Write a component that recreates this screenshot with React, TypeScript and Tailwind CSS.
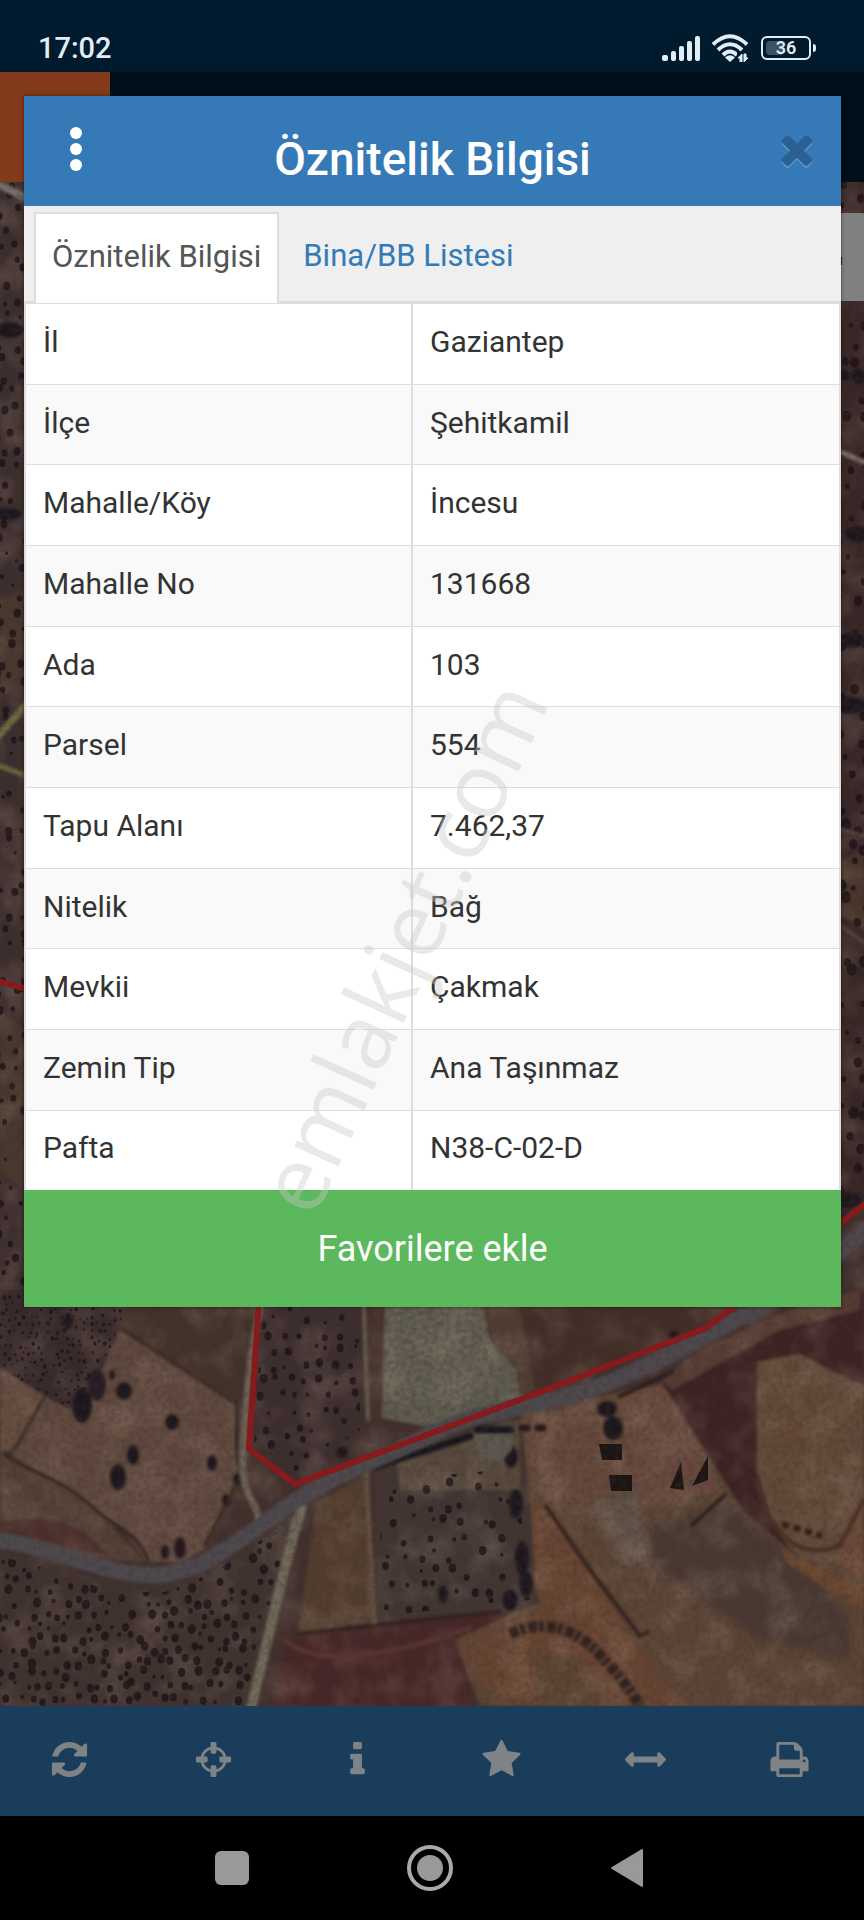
import type { ReactNode } from 'react';

const ROWS = [
  ['İl', 'Gaziantep'],
  ['İlçe', 'Şehitkamil'],
  ['Mahalle/Köy', 'İncesu'],
  ['Mahalle No', '131668'],
  ['Ada', '103'],
  ['Parsel', '554'],
  ['Tapu Alanı', '7.462,37'],
  ['Nitelik', 'Bağ'],
  ['Mevkii', 'Çakmak'],
  ['Zemin Tip', 'Ana Taşınmaz'],
  ['Pafta', 'N38-C-02-D'],
];

const TOOLS = [
  {
    name: 'Yenile',
    d: 'M1639 1056q0 5-1 7-64 268-268 434.5t-478 166.5q-146 0-282.5-55t-243.5-157l-129 129q-19 19-45 19t-45-19-19-45v-448q0-26 19-45t45-19h448q26 0 45 19t19 45-19 45l-137 137q71 66 161 102t187 36q134 0 250-65t186-179q11-17 53-117 8-23 30-23h192q13 0 22.5 9.5t9.5 22.5zm25-800v448q0 26-19 45t-45 19h-448q-26 0-45-19t-19-45 19-45l138-138q-148-137-349-137-134 0-250 65t-186 179q-11 17-53 117-8 23-30 23h-199q-13 0-22.5-9.5t-9.5-22.5v-7q65-268 270-434.5t480-166.5q146 0 284 55.5t245 156.5l130-129q19-19 45-19t45 19 19 45z',
  },
  {
    name: 'Konum',
    d: 'M1325 1024h-109q-26 0-45-19t-19-45v-128q0-26 19-45t45-19h109q-32-108-112.5-188.5t-188.5-112.5v109q0 26-19 45t-45 19h-128q-26 0-45-19t-19-45v-109q-108 32-188.5 112.5t-112.5 188.5h109q26 0 45 19t19 45v128q0 26-19 45t-45 19h-109q32 108 112.5 188.5t188.5 112.5v-109q0-26 19-45t45-19h128q26 0 45 19t19 45v109q108-32 188.5-112.5t112.5-188.5zm339-192v128q0 26-19 45t-45 19h-143q-37 161-154.5 278.5t-278.5 154.5v143q0 26-19 45t-45 19h-128q-26 0-45-19t-19-45v-143q-161-37-278.5-154.5t-154.5-278.5h-143q-26 0-45-19t-19-45v-128q0-26 19-45t45-19h143q37-161 154.5-278.5t278.5-154.5v-143q0-26 19-45t45-19h128q26 0 45 19t19 45v143q161 37 278.5 154.5t154.5 278.5h143q26 0 45 19t19 45z',
  },
  {
    name: 'Bilgi',
    d: 'M1216 1344v128q0 26-19 45t-45 19h-512q-26 0-45-19t-19-45v-128q0-26 19-45t45-19h64v-384h-64q-26 0-45-19t-19-45v-128q0-26 19-45t45-19h384q26 0 45 19t19 45v576h64q26 0 45 19t19 45zm-128-1152v192q0 26-19 45t-45 19h-256q-26 0-45-19t-19-45v-192q0-26 19-45t45-19h256q26 0 45 19t19 45z',
  },
  {
    name: 'Favoriler',
    d: 'M1728 647q0 22-26 48l-363 354 86 500q1 7 1 20 0 21-10.5 35.5t-30.5 14.5q-19 0-40-12l-449-236-449 236q-22 12-40 12-21 0-31.5-14.5t-10.5-35.5q0-6 2-20l86-500-364-354q-25-27-25-48 0-37 56-46l502-73 225-455q19-41 49-41t49 41l225 455 502 73q56 9 56 46z',
  },
  {
    name: 'Ölçüm',
    d: 'M1792 896q0 26-19 45l-256 256q-19 19-45 19t-45-19-19-45v-128h-1024v128q0 26-19 45t-45 19-45-19l-256-256q-19-19-19-45t19-45l256-256q19-19 45-19t45 19 19 45v128h1024v-128q0-26 19-45t45-19 45 19l256 256q19 19 19 45z',
  },
  {
    name: 'Yazdır',
    d: 'M448 1536h896v-256h-896v256zm0-640h896v-384h-160q-40 0-68-28t-28-68v-160h-640v640zm1152 64q0-26-19-45t-45-19-45 19-19 45 19 45 45 19 45-19 19-45zm128 0v416q0 13-9.5 22.5t-22.5 9.5h-224v160q0 40-28 68t-68 28h-960q-40 0-68-28t-28-68v-160h-224q-13 0-22.5-9.5t-9.5-22.5v-416q0-79 56.5-135.5t135.5-56.5h64v-544q0-40 28-68t68-28h672q40 0 88 20t76 48l152 152q28 28 48 76t20 88v256h64q79 0 135.5 56.5t56.5 135.5z',
  },
];

const TIMES =
  'M1490 1322q0 40-28 68l-136 136q-28 28-68 28t-68-28l-294-294-294 294q-28 28-68 28t-68-28l-136-136q-28-28-28-68t28-68l294-294-294-294q-28-28-28-68t28-68l136-136q28-28 68-28t68 28l294 294 294-294q28-28 68-28t68 28l136 136q28 28 28 68t-28 68l-294 294 294 294q28 28 28 68z';

// Orchards: jittered grid of trees, clipped to the field outline
const ORCHARDS = [
  { id: 'nw', points: '0,1290 125,1300 118,1333 105,1362 72,1410 0,1368', step: 7, r: 1.5, tilt: 0.3 },
  { id: 'sw', points: '0,1556 60,1572 110,1592 165,1592 215,1572 268,1535 292,1530 272,1620 246,1706 0,1706', step: 12, r: 3.2, tilt: 0.4 },
  { id: 'parcel', points: '262,1306 360,1306 360,1430 296,1472 254,1446', step: 15, r: 3, tilt: 0.2 },
  { id: 'mid', points: '380,1480 500,1470 520,1500 530,1600 380,1616', step: 17, r: 3, tilt: 0.1 },
  { id: 'west', points: '0,182 24,182 24,1290 0,1290', step: 15, r: 3, tilt: 0.3 },
  { id: 'east', points: '841,182 864,182 864,1200 841,1200', step: 18, r: 4, tilt: 0.2 },
];

function trees(points: string, step: number, r: number, tilt: number) {
  const pts = points.split(' ').map((p) => p.split(',').map(Number));
  const xs = pts.map((p) => p[0]);
  const ys = pts.map((p) => p[1]);
  const out: { x: number; y: number; r: number }[] = [];
  let seed = step * 7919 + ys[0];
  const rand = () => {
    seed = (seed * 16807) % 2147483647;
    return seed / 2147483647;
  };
  for (let y = Math.min(...ys); y < Math.max(...ys); y += step) {
    for (let x = Math.min(...xs) - step; x < Math.max(...xs) + step; x += step) {
      const shift = ((y * tilt) % step) + (rand() - 0.5) * step * 0.7;
      const dy = (rand() - 0.5) * step * 0.7;
      const size = r * (0.5 + rand() * 0.8);
      if (rand() > 0.18) out.push({ x: x + shift, y: y + dy, r: size });
    }
  }
  return out;
}

function MapView() {
  return (
    <svg
      className="absolute inset-0 h-full w-full"
      viewBox="0 182 864 1524"
      preserveAspectRatio="xMidYMin slice"
      aria-hidden="true"
    >
      <defs>
        <filter id="grain" x="0" y="0" width="100%" height="100%">
          <feTurbulence type="fractalNoise" baseFrequency="0.18" numOctaves="4" seed="4" />
          <feColorMatrix values="0 0 0 0 0.05  0 0 0 0 0.03  0 0 0 0 0.03  1.6 0 0 0 -0.62" />
        </filter>
        <filter id="patches" x="0" y="0" width="100%" height="100%">
          <feTurbulence type="fractalNoise" baseFrequency="0.03" numOctaves="3" seed="9" />
          <feColorMatrix values="0 0 0 0 0.5  0 0 0 0 0.38  0 0 0 0 0.3  0 1.4 0 0 -0.6" />
        </filter>
        <filter id="soft">
          <feGaussianBlur stdDeviation="1.4" />
        </filter>
        <filter id="softer">
          <feGaussianBlur stdDeviation="5" />
        </filter>
        {ORCHARDS.map((o) => (
          <clipPath key={o.id} id={`clip-${o.id}`}>
            <polygon points={o.points} />
          </clipPath>
        ))}
      </defs>

      <rect y="182" width="864" height="1524" fill="#41302c" />

      {/* Fields */}
      <g filter="url(#soft)">
        <rect y="182" width="40" height="1120" fill="#3d2d2d" />
        <rect x="830" y="182" width="40" height="1040" fill="#392828" />
        <path d="M0 600 24 590V700L0 690z" fill="#48382f" />
        <path d="M0 1010 24 1030V1190L0 1170z" fill="#4a382f" />
        <path d="M841 860 864 850V930L841 915z" fill="#4a352c" />
        <path d="M0 1290H125L105 1362 72 1412 0 1368z" fill="#392a2c" />
        <path d="M125 1300H262L240 1406 120 1330z" fill="#43322b" />
        <path d="M120 1330 238 1406 234 1455 241 1478 221 1515 204 1550 180 1562 146 1562 125 1530 85 1503 45 1478 12 1455 45 1397 72 1410 104 1366z" fill="#604a3d" />
        <path d="M0 1368 44 1396 12 1450 0 1452z" fill="#664d3f" />
        <path d="M0 1452 45 1474 90 1505 145 1562 70 1556 0 1538z" fill="#533f35" />
        <path d="M0 1522C40 1512 80 1520 108 1554L60 1550 0 1535z" fill="#4b2f29" />
        <path d="M0 1552 120 1585 215 1570 305 1510 250 1706H0z" fill="#41332f" />
        <path d="M259 1300H368V1430L295 1484 249 1449z" fill="#3d2d2d" />
        <path d="M368 1300H388V1420H368z" fill="#44302a" />
        <path d="M385 1300H482L490 1340 517 1370 525 1396 432 1428 382 1418z" fill="#5e5b50" />
        <path d="M482 1300H520L535 1390 520 1396 515 1365 495 1350z" fill="#513e32" />
        <path d="M518 1300H745L706 1328 538 1394z" fill="#422f28" />
        <path d="M316 1504 365 1474 374 1622 298 1634z" fill="#533d2f" />
        <path d="M375 1470 490 1430 530 1480 540 1605 376 1622z" fill="#433632" />
        <path d="M395 1450 520 1420 520 1490 400 1490z" fill="#57483b" />
        <path d="M285 1640 376 1624 520 1612 462 1650 475 1706H272z" fill="#472728" />
        <path d="M520 1410 662 1384 750 1500 864 1560V1706H480L455 1640 540 1602z" fill="#5c4535" />
        <path d="M520 1418 600 1400 640 1490 560 1510 530 1480z" fill="#65483a" />
        <path d="M618 1398 662 1384 706 1452 720 1490 640 1510z" fill="#674a3c" />
      </g>
      <path d="M650 1525 730 1500 800 1560 850 1620V1660L760 1640 690 1590 650 1560z" fill="#4a3730" filter="url(#softer)" />
      <path d="M590 1500 640 1490 650 1560 620 1560z" fill="#615147" filter="url(#softer)" />
      <g filter="url(#soft)">
        <path d="M664 1384 780 1310 864 1290V1390L757 1360V1490L790 1550 744 1512 706 1452z" fill="#3c2424" />
        <path d="M662 1380 700 1350 800 1305 860 1290V1310L780 1330 672 1390z" fill="#563b30" />
        <path d="M757 1362 800 1354 830 1370 864 1386V1530L832 1548 800 1546 772 1520 757 1470z" fill="#634a39" />
        <path d="M532 1500 546 1500 590 1570 660 1680 690 1706H650L600 1650 545 1608 535 1590z" fill="#684532" />
        <path d="M780 1548 864 1592V1610L790 1566z" fill="#69462f" />
        <path d="M864 1500 835 1560 864 1580z" fill="#6a4937" />
      </g>
      <path d="M458 1645 540 1608 590 1640 640 1706H505L480 1680z" fill="#684530" filter="url(#softer)" />
      <path d="M530 1650 570 1655 610 1706H540z" fill="#5b4433" filter="url(#softer)" />

      <rect y="182" width="864" height="1524" filter="url(#patches)" opacity="0.35" />

      {/* Trees */}
      {ORCHARDS.map((o) => (
        <g key={o.id} clipPath={`url(#clip-${o.id})`} fill="#170f14" opacity="0.72">
          {trees(o.points, o.step, o.r, o.tilt).map((t, i) => (
            <ellipse key={i} cx={t.x} cy={t.y} rx={t.r} ry={t.r * 1.2} />
          ))}
        </g>
      ))}
      <g fill="#1b181b" filter="url(#soft)">
        <ellipse cx="82" cy="1405" rx="10" ry="18" />
        <ellipse cx="97" cy="1385" rx="9" ry="16" fill="#261f22" />
        <ellipse cx="124" cy="1391" rx="8" ry="9" />
        <ellipse cx="112" cy="1375" rx="3" ry="5" />
        <ellipse cx="68" cy="1321" rx="5" ry="7" />
        <ellipse cx="172" cy="1422" rx="7" ry="8" />
        <ellipse cx="133" cy="1455" rx="6" ry="10" />
        <ellipse cx="118" cy="1477" rx="8" ry="13" />
        <ellipse cx="212" cy="1463" rx="5" ry="8" />
        <ellipse cx="180" cy="1548" rx="6" ry="11" fill="#27151b" />
        <ellipse cx="165" cy="1552" rx="4" ry="7" />
        <ellipse cx="238" cy="1479" rx="5" ry="6" />
        <ellipse cx="226" cy="1500" rx="4" ry="6" />
        <ellipse cx="342" cy="1452" rx="6" ry="6" />
        <ellipse cx="516" cy="1504" rx="7" ry="15" />
        <ellipse cx="522" cy="1558" rx="7" ry="17" />
        <ellipse cx="526" cy="1584" rx="7" ry="13" />
        <ellipse cx="510" cy="1600" rx="8" ry="11" />
        <ellipse cx="443" cy="1594" rx="5" ry="9" />
        <ellipse cx="511" cy="1457" rx="7" ry="11" />
        <ellipse cx="607" cy="1409" rx="10" ry="8" />
        <ellipse cx="613" cy="1428" rx="10" ry="12" />
        <ellipse cx="674" cy="1334" rx="4" ry="4" />
        <ellipse cx="10" cy="330" rx="14" ry="8" />
        <ellipse cx="6" cy="514" rx="16" ry="6" />
        <ellipse cx="858" cy="376" rx="8" ry="8" />
        <ellipse cx="858" cy="534" rx="13" ry="8" />
        <ellipse cx="852" cy="640" rx="14" ry="8" />
        <ellipse cx="850" cy="705" rx="16" ry="9" />
        <ellipse cx="848" cy="1200" rx="14" ry="8" />
      </g>

      {/* Field edges, tracks and hedges */}
      <g fill="none" strokeLinecap="round" filter="url(#soft)">
        <path d="M120 1328 238 1405" stroke="#35261f" strokeWidth="2" />
        <path d="M44 1398 15 1450" stroke="#3b2b24" strokeWidth="2" />
        <path d="M5 1455C40 1478 60 1478 90 1505S135 1530 148 1560" stroke="#2f221e" strokeWidth="3" />
        <path d="M237 1400V1450L241 1475 205 1545" stroke="#33251f" strokeWidth="3" />
        <path d="M298 1634 432 1619 500 1612" stroke="#2b1a1a" strokeWidth="3" />
        <path d="M285 1640C310 1665 380 1660 470 1628" stroke="#5a3532" strokeWidth="5" />
        <path d="M546 1506 590 1570 640 1636 648 1632" stroke="#33201d" strokeWidth="4" />
        <path d="M510 1634C545 1618 575 1628 600 1655S630 1690 640 1706" stroke="#33221f" strokeWidth="11" strokeDasharray="9 2 5 3" strokeLinecap="butt" />
        <path d="M692 1525 726 1494" stroke="#231918" strokeWidth="3" />
        <path d="M782 1524 822 1536" stroke="#2a1a19" strokeWidth="6" strokeDasharray="7 5" strokeLinecap="butt" />
        <path d="M757 1480C770 1545 810 1560 840 1545L864 1500" stroke="#4a2e28" strokeWidth="4" />
        <path d="M376 1466 470 1436" stroke="#14161c" strokeWidth="8" />
        <path d="M478 1430H510" stroke="#14161c" strokeWidth="8" />
        <path d="M522 1428H552" stroke="#2a1416" strokeWidth="7" strokeDasharray="5 11" />
        <path d="M620 1396 672 1372" stroke="#2a1a1a" strokeWidth="4" />
        <path d="M364 1306 368 1420" stroke="#6b5d4d" strokeWidth="4" />
        <path d="M366 1470 374 1622" stroke="#645140" strokeWidth="5" />
        <path d="M262 1300C250 1350 246 1400 243 1450S258 1500 259 1522" stroke="#6c6255" strokeWidth="7" />
        <path d="M302 1508C290 1540 280 1590 250 1712" stroke="#716a5a" strokeWidth="10" />
        <path d="M841 452 864 462" stroke="#7b7263" strokeWidth="5" />
        <path d="M841 829 864 836M841 926 864 942" stroke="#5d4840" strokeWidth="3" />
        <path d="M-5 740 30 700" stroke="#716b43" strokeWidth="7" />
        <path d="M-5 764 30 777" stroke="#716b43" strokeWidth="5" />
        <path d="M0 185 24 197" stroke="#77706a" strokeWidth="8" />
      </g>

      {/* Sheds */}
      <g fill="#1b1413">
        <path d="M599 1444H622V1460H602zM609 1475H632V1491H611z" />
        <path d="M670 1488 681 1462 684 1490zM692 1486 708 1456 708 1480z" />
      </g>
      <path d="M474 1434H512V1450L500 1462 480 1456z" fill="#5c5850" filter="url(#soft)" />
      <g stroke="#827d6c" strokeWidth="2" fill="none" opacity="0.45" filter="url(#soft)">
        {[1312, 1320, 1328, 1336, 1344, 1352, 1360, 1368, 1376, 1384, 1392, 1400].map((y) => (
          <path key={y} d={`M390 ${y}q6-5 12 0t12 0 12 0 12 0 12 0 12 0 12 0`} strokeDasharray="11 5 7 3" />
        ))}
      </g>

      {/* Asphalt road */}
      <path
        d="M-5 1540C50 1545 100 1574 150 1575S240 1540 285 1508 380 1460 432 1434 520 1410 570 1396 680 1350 732 1322 800 1290 870 1225"
        fill="none"
        stroke="#4e4a4e"
        strokeWidth="16"
        filter="url(#soft)"
      />

      <rect y="182" width="864" height="1524" filter="url(#grain)" opacity="0.5" />

      {/* Parcel boundary */}
      <path d="M259 1300 249 1449 295 1484 432 1433 522 1399 706 1328 735 1306 870 1200M-5 980 30 990" fill="none" stroke="#861a1c" strokeWidth="6" />
    </svg>
  );
}

function StatusBar() {
  return (
    <div className="flex h-[72px] items-center justify-between bg-[#001a2e] pt-6 pr-12 pl-[38px] text-[#e3edf5]">
      <span className="text-[29px] leading-8 font-medium">17:02</span>
      <div className="flex items-center gap-[10px]">
        <svg className="h-7 w-10" viewBox="0 0 40 28" fill="currentColor" aria-hidden="true">
          <rect x="1" y="21" width="6" height="6" rx="2" />
          <rect x="10" y="17" width="5" height="10" rx="2" />
          <rect x="18" y="12" width="5" height="15" rx="2" />
          <rect x="26" y="7" width="5" height="20" rx="2" />
          <rect x="34" y="2" width="5" height="25" rx="2" />
        </svg>
        <svg className="h-7 w-[38px]" viewBox="0 0 38 28" aria-hidden="true">
          <g fill="none" stroke="currentColor" strokeWidth="4">
            <path d="M2 10.500Q19-6 36 10.500" />
            <path d="M7 16Q19 4.500 31 16" />
            <path d="M12 21Q19 14 26 21" />
          </g>
          <path d="M14 23.500Q19 19 24 23.500L19 28z" fill="currentColor" />
          <rect x="26" y="18" width="12" height="10" fill="#001a2e" />
          <path d="M27 24 31 20V28H29V24zM33 20H35V24H37L33 28z" fill="currentColor" stroke="currentColor" strokeWidth="1" />
        </svg>
        <div className="ml-[2px] flex items-center gap-[2px]">
          <div className="relative flex h-6 w-[50px] items-center justify-center rounded-md border-2 border-[#e3edf5]">
            <div className="absolute inset-y-[3px] left-[3px] w-4 rounded-l-sm bg-[#3f5261]" />
            <span className="relative text-[18px] leading-5 font-semibold">36</span>
          </div>
          <div className="h-2 w-[3px] rounded-r-sm bg-[#e3edf5]" />
        </div>
      </div>
    </div>
  );
}

function Dialog({ title, children }: { title: string; children: ReactNode }) {
  return (
    <section
      role="dialog"
      aria-label={title}
      className="relative mt-6 mr-[23px] ml-6 self-start bg-white shadow-[0_0_4px_rgba(0,0,0,0.5)] [grid-area:1/1]"
    >
      <header className="grid h-[110px] grid-cols-[104px_1fr_104px] items-center bg-[#357ab7] text-white">
        <button type="button" aria-label="Menü" className="flex flex-col items-center gap-1 pb-1">
          <span className="size-[12px] rounded-full bg-white" />
          <span className="size-[12px] rounded-full bg-white" />
          <span className="size-[12px] rounded-full bg-white" />
        </button>
        <h1 className="pt-4 text-center text-[46px] leading-[52px] font-medium">{title}</h1>
        <button type="button" aria-label="Kapat" className="flex justify-center pb-1 pl-4">
          <svg className="size-[46px] drop-shadow-[0_2px_0_#5b96c9]" viewBox="0 0 1792 1792" fill="#2a6192">
            <path d={TIMES} />
          </svg>
        </button>
      </header>
      {children}
    </section>
  );
}

export default function App() {
  return (
    <div className="flex min-h-screen flex-col bg-black font-[Roboto,sans-serif]">
      <StatusBar />

      <main className="relative grid flex-1">
        {/* Dimmed page behind the dialog */}
        <div className="flex flex-col [grid-area:1/1]">
          <div className="h-[110px] bg-[#000f1a]">
            <div className="h-full w-[110px] bg-[#833b1b]" />
          </div>
          <div className="relative flex flex-1 justify-end overflow-hidden pt-[31px]">
            <MapView />
            <div className="relative h-[88px] w-6 bg-[#808080]">
              <div className="mt-11 h-2 w-[2px] bg-[#222]" />
            </div>
          </div>
          <nav className="grid h-[110px] grid-cols-6 bg-[#1a3d5c]">
            {TOOLS.map(({ name, d }) => (
              <button key={name} type="button" aria-label={name} className="flex items-center justify-center pr-[6px] pb-1">
                <svg className="size-[41px]" viewBox="0 0 1792 1792" fill="#808386">
                  <path d={d} />
                </svg>
              </button>
            ))}
          </nav>
        </div>

        <Dialog title="Öznitelik Bilgisi">
          <div className="flex h-[97px] items-end border-b-2 border-[#ddd] bg-[#efefef] pl-[10px] text-[31px] leading-9">
            <a href="#oznitelik" className="-mb-[2px] flex h-[91px] items-center border-2 border-b-0 border-[#ddd] bg-white px-4 pb-1 text-[#555]">
              Öznitelik Bilgisi
            </a>
            <a href="#bina" className="-mb-[2px] flex h-[91px] items-center px-6 pb-1 text-[#337ab7]">
              Bina/BB Listesi
            </a>
          </div>
          <table className="h-[887px] w-full table-fixed border-collapse border-x-2 border-[#ddd] text-[30px] leading-9 text-[#333]">
            <colgroup>
              <col className="w-[387px]" />
              <col />
            </colgroup>
            <tbody>
              {ROWS.map(([label, value]) => (
                <tr key={label} className="border-t border-[#ddd] even:bg-[#f9f9f9]">
                  <th scope="row" className="border-r-2 border-[#ddd] pb-1 pl-[17px] text-left font-normal">
                    {label}
                  </th>
                  <td className="pb-1 pl-[17px]">{value}</td>
                </tr>
              ))}
            </tbody>
          </table>
          <button type="button" className="block h-[117px] w-full bg-[#5cb85c] text-[36px] leading-10 text-white">
            Favorilere ekle
          </button>
        </Dialog>
      </main>

      {/* Android navigation */}
      <div className="flex h-[104px] items-center justify-center gap-[158px] bg-black pr-[6px]">
        <button type="button" aria-label="Son uygulamalar" className="size-[34px] rounded-md bg-[#999]" />
        <button type="button" aria-label="Ana ekran">
          <svg className="size-[46px]" viewBox="0 0 46 46">
            <circle cx="23" cy="23" r="21" fill="none" stroke="#aaa" strokeWidth="4" />
            <circle cx="23" cy="23" r="13" fill="#999" />
          </svg>
        </button>
        <button type="button" aria-label="Geri">
          <svg className="h-[38px] w-8" viewBox="0 0 32 38" fill="#999" stroke="#999" strokeWidth="2" strokeLinejoin="round">
            <path d="M1 19 31 1V37z" />
          </svg>
        </button>
      </div>

      {/* Watermark */}
      <div className="pointer-events-none absolute inset-0 flex h-full items-center justify-center overflow-hidden">
        <span className="rotate-[-65.5deg] pb-[68px] font-['Open_Sans',sans-serif] text-[91px] leading-none text-[#c8c8c8]/40">
          emlakjet.com
        </span>
      </div>
    </div>
  );
}
